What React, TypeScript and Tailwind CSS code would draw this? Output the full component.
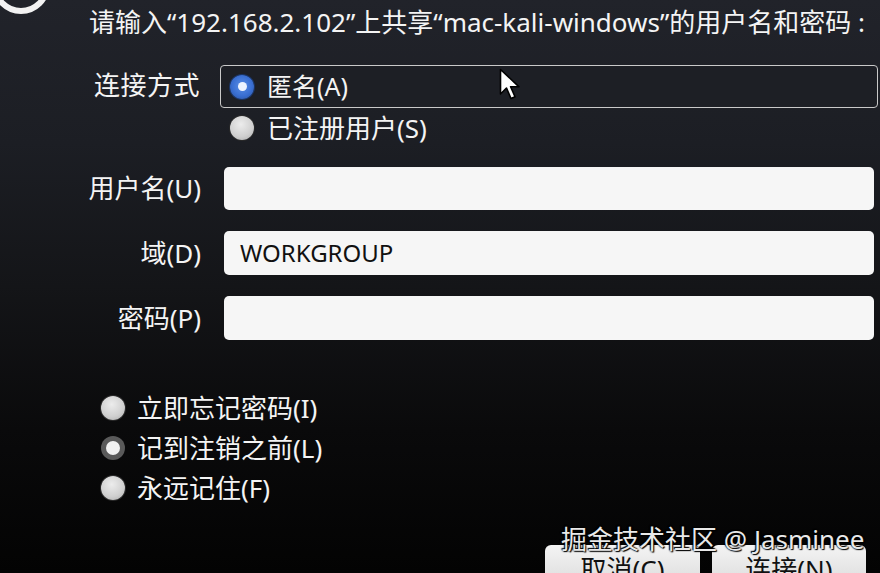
import React from "react";

const font = { fontFamily: '"Noto Sans", "Noto Sans CJK SC", sans-serif' };

function BlueRadio() {
  return (
    <span className="flex h-[24px] w-[24px] items-center justify-center rounded-full bg-[radial-gradient(circle_at_50%_45%,#5b8fe6_0%,#3a6fd2_55%,#254f9e_100%)] shadow-[0_0_0_1px_#1a3566]">
      <span className="h-[9px] w-[9px] rounded-full bg-[#eef4ff]" />
    </span>
  );
}

function GrayRadio() {
  return (
    <span className="h-[24px] w-[24px] rounded-full bg-[radial-gradient(circle_at_45%_35%,#ececec_0%,#cfcfcf_60%,#a8a8a8_100%)] shadow-[0_0_0_1px_#2a2a2a]" />
  );
}

function RingRadio() {
  return (
    <span className="flex h-[24px] w-[24px] items-center justify-center rounded-full bg-[#5a5a5a]">
      <span className="h-[14px] w-[14px] rounded-full bg-[#f2f2f2]" />
    </span>
  );
}

export default function App() {
  return (
    <div
      className="relative flex h-[573px] w-[880px] flex-col overflow-hidden bg-[linear-gradient(to_bottom,#21232a_0%,#1c1e24_25%,#141518_50%,#0a0a0b_75%,#030303_100%)] text-[#f4f4f4]"
      style={font}
    >
      {/* partial circle icon at top-left */}
      <div className="absolute left-[-8px] top-[-44px] h-[58px] w-[58px] rounded-full border-[6px] border-[#f2f2f2]" />

      {/* title */}
      <div className="pl-[89px] pt-[5px] text-[26px] leading-[34px] whitespace-nowrap tracking-[0px]">
        请输入“192.168.2.102”上共享“mac-kali-windows”的用户名和密码 :
      </div>

      {/* connection method */}
      <div className="mt-[26px] flex">
        <div className="w-[200px] pt-[2px] text-right text-[26px] leading-[36px] tracking-[0.5px]">连接方式</div>
        <div className="ml-[20px] flex h-[43px] w-[658px] items-center gap-[13px] rounded-[4px] border border-[#c9c9c9] bg-[#1d1f25] pl-[9px] text-[25px]">
          <BlueRadio />
          <span>匿名(A)</span>
        </div>
      </div>
      <div className="ml-[230px] mt-[2px] flex h-[36px] items-center gap-[13px] text-[26px]">
        <GrayRadio />
        <span>已注册用户(S)</span>
      </div>

      {/* inputs */}
      <div className="mt-[21px] flex flex-col gap-[21px]">
        <div className="flex items-center">
          <div className="w-[201px] text-right text-[26px]">用户名(U)</div>
          <div className="ml-[23px] h-[43px] w-[650px] rounded-[5px] bg-[#f6f6f6]" />
        </div>
        <div className="flex items-center">
          <div className="w-[201px] text-right text-[26px]">域(D)</div>
          <div className="ml-[23px] flex h-[44px] w-[650px] items-center rounded-[5px] bg-[#f6f6f6] pl-[16px] text-[24px] text-[#111]">
            WORKGROUP
          </div>
        </div>
        <div className="flex items-center">
          <div className="w-[201px] text-right text-[26px]">密码(P)</div>
          <div className="ml-[23px] h-[44px] w-[650px] rounded-[5px] bg-[#f6f6f6]" />
        </div>
      </div>

      {/* remember options */}
      <div className="ml-[101px] mt-[50px] flex flex-col gap-[4px] text-[26px]">
        <div className="flex h-[36px] items-center gap-[12px]">
          <GrayRadio />
          <span>立即忘记密码(I)</span>
        </div>
        <div className="flex h-[36px] items-center gap-[12px]">
          <RingRadio />
          <span>记到注销之前(L)</span>
        </div>
        <div className="flex h-[36px] items-center gap-[12px]">
          <GrayRadio />
          <span>永远记住(F)</span>
        </div>
      </div>

      {/* buttons */}
      <div className="mt-auto flex justify-end gap-[12px] pr-[14px]">
        <div className="flex h-[40px] w-[155px] translate-y-[12px] items-start justify-center rounded-t-[6px] bg-[linear-gradient(to_bottom,#f4f4f4,#dcdcdc)] pt-[9px] text-[26px] leading-[30px] text-[#111]">
          取消(C)
        </div>
        <div className="flex h-[40px] w-[154px] translate-y-[12px] items-start justify-center rounded-t-[6px] bg-[linear-gradient(to_bottom,#f4f4f4,#dcdcdc)] pt-[9px] text-[26px] leading-[30px] text-[#111]">
          连接(N)
        </div>
      </div>

      {/* watermark */}
      <div className="absolute left-[561px] top-[523px] whitespace-nowrap text-[26px] leading-[32px] text-[#e9e9e9] [text-shadow:0_0_2px_#000,1px_1px_1px_#000,-1px_-1px_1px_#000]">
        掘金技术社区 @ Jasminee
      </div>

      {/* mouse cursor */}
      <svg className="absolute left-[499px] top-[68px]" width="24" height="34" viewBox="0 0 24 34">
        <path d="M1.5 1.5 L1.5 26 L7.5 20 L12 30.5 L16 28.8 L11.6 18.8 L20 18.8 Z" fill="#fff" stroke="#000" strokeWidth="1.6" strokeLinejoin="round" />
      </svg>
    </div>
  );
}
